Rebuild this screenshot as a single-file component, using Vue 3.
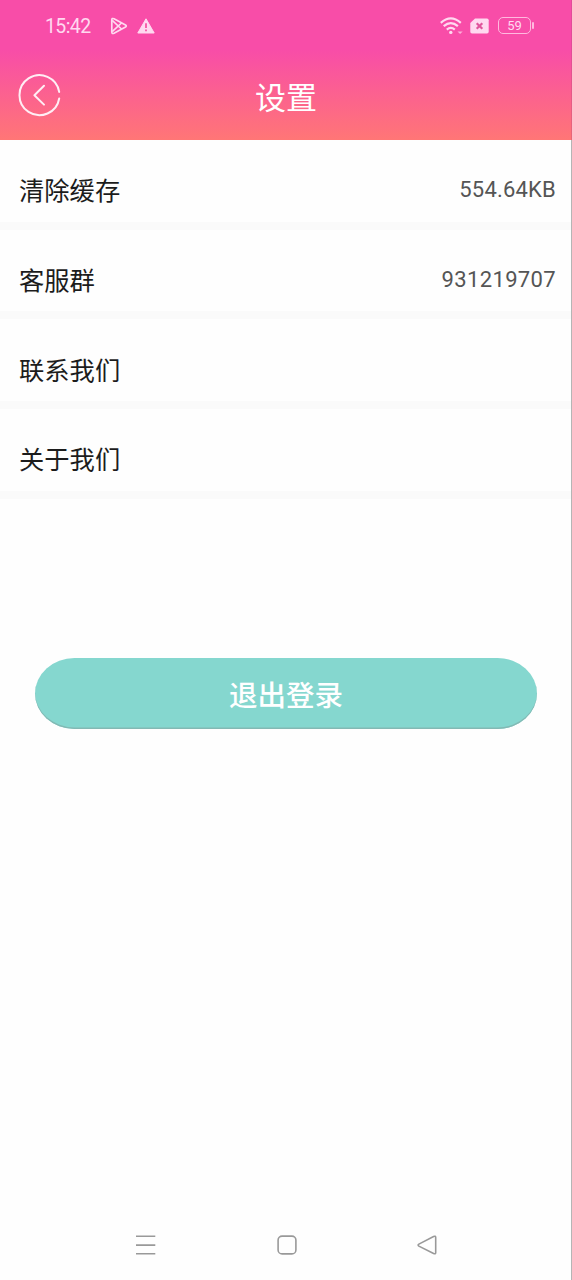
<script setup>
const rows = [
  { label: '清除缓存', value: '554.64KB' },
  { label: '客服群', value: '931219707', wide: true },
  { label: '联系我们', value: '' },
  { label: '关于我们', value: '' },
]
</script>

<template>
  <div class="screen">
    <header class="top">
      <div class="status">
        <span class="time">15:42</span>
        <svg class="play" width="18" height="18" viewBox="0 0 18 18" fill="none" stroke="currentColor" stroke-width="1.7" stroke-linejoin="round">
          <path d="M4 1.8Q1.8.8 1.8 3V15Q1.8 17.2 4 16.2L15.5 10Q17 9 15.5 8Z" />
          <path d="M2.2 3.4L11.5 12M2.2 14.6L11.5 6" />
        </svg>
        <svg class="warn" width="18" height="16" viewBox="0 0 18 16">
          <path d="M9 .8L17.2 15H.8Z" fill="currentColor" stroke="currentColor" stroke-linejoin="round" />
          <path d="M9 5.3V10M9 11.5V13.3" stroke="#f755a5" stroke-width="1.8" />
        </svg>
        <span class="gap"></span>
        <svg class="wifi" width="24" height="18" viewBox="0 0 24 18" fill="none" stroke="currentColor" stroke-width="2.2">
          <path d="M.8 5.8Q10.8-3 20.8 5.8M3.7 9.2Q10.8 3 17.9 9.2M6.8 12.6Q10.8 9.2 14.8 12.6" />
          <circle cx="10.8" cy="15.4" r="1.7" fill="currentColor" stroke="none" />
          <path d="M17.5 14.5H22.7L20.1 17Z" fill="currentColor" stroke="none" opacity=".7" />
        </svg>
        <svg class="sim" width="19" height="16" viewBox="0 0 19 16">
          <path d="M5 .5H17Q18.7.5 18.7 2.2V13.8Q18.7 15.5 17 15.5H2Q.3 15.5.3 13.8V5Z" fill="currentColor" />
          <path d="M6.7 5.2L12.3 10.8M12.3 5.2L6.7 10.8" stroke="#e0559c" stroke-width="2.2" />
        </svg>
        <span class="battery">59</span>
      </div>
      <div class="bar">
        <svg class="back" width="44" height="44" viewBox="0 0 44 44" fill="none" stroke="currentColor" stroke-width="2" stroke-linecap="round" stroke-linejoin="round">
          <path d="M41.2 18.9A20 20 0 1 0 41.2 25.5" />
          <path d="M26 12.8L16.4 22.2L26 31.6" />
        </svg>
        <h1>设置</h1>
        <span class="side"></span>
      </div>
    </header>

    <main>
      <div v-for="row in rows" :key="row.label" class="row">
        <span class="label">{{ row.label }}</span>
        <span class="value" :class="{ wide: row.wide }">{{ row.value }}</span>
      </div>
      <button class="logout">退出登录</button>
    </main>

    <nav>
      <svg width="22" height="22" viewBox="0 0 22 22"><path d="M1 2.2H20.3M1 11.1H20.3M1 19.8H20.3" /></svg>
      <svg width="22" height="22" viewBox="0 0 22 22"><rect x="2.1" y="2.1" width="17.8" height="17.8" rx="4" /></svg>
      <svg width="22" height="22" viewBox="0 0 22 22"><path d="M17.6 2.5Q19.7 1.6 19.7 3.6V18.4Q19.7 20.4 17.6 19.5L2.9 12.1Q1.3 11.1 2.9 10.1Z" /></svg>
    </nav>
  </div>
</template>

<style>
body {
  margin: 0;
}
</style>

<style scoped>
.screen {
  box-sizing: border-box;
  width: 572px;
  height: 1280px;
  display: flex;
  flex-direction: column;
  background: #fefefe;
  font-family: Roboto, "Noto Sans CJK SC", sans-serif;
  box-shadow: inset -1px 0 #b5b5b5;
}
.top {
  height: 140px;
  color: #fff;
  background: linear-gradient(#f84da8 0, #f84da8 50px, #ff7676 140px);
  box-shadow: inset -1px 0 rgba(180, 70, 120, 0.3);
}
.status {
  height: 51px;
  padding: 0 41px 0 45px;
  display: flex;
  align-items: center;
  color: #ffd9f0;
}
.time {
  width: 65px;
  padding-top: 2px;
  font-size: 19.5px;
  letter-spacing: -0.6px;
}
.warn {
  margin-left: 9px;
}
.gap {
  flex: 1;
}
.sim {
  margin: 0 9px 0 6px;
}
.battery {
  position: relative;
  box-sizing: border-box;
  width: 33px;
  height: 17px;
  border: 1.5px solid #ffb9df;
  border-radius: 5px;
  font-size: 13px;
  line-height: 15px;
  text-align: center;
}
.battery::after {
  content: "";
  position: absolute;
  right: -4px;
  top: 4px;
  width: 2px;
  height: 7px;
  border-radius: 1px;
  background: #ffb9df;
}
.bar {
  height: 88px;
  padding: 0 18px;
  display: flex;
  align-items: center;
  justify-content: space-between;
  color: #ffeef4;
}
.back {
  width: 44px;
}
.side {
  width: 44px;
}
h1 {
  margin: 8px 0 0;
  font-size: 31px;
  font-weight: 400;
  line-height: 40px;
  color: #fff;
}
.row {
  box-sizing: border-box;
  height: 89.75px;
  padding: 18px 15px 0 19px;
  margin-right: 1px;
  border-bottom: 8px solid #fafafa;
  display: flex;
  align-items: center;
  justify-content: space-between;
}
.row:first-child {
  height: 89.5px;
}
.label {
  padding-top: 5px;
  font-size: 25.3px;
  line-height: 32px;
  color: #1c1c1c;
}
.value {
  padding-top: 0.5px;
  font-size: 22px;
  line-height: 30px;
  letter-spacing: 0.2px;
  color: #555;
}
.wide {
  padding-top: 1px;
  letter-spacing: 0.35px;
}
.logout {
  display: block;
  width: 502px;
  height: 71px;
  margin: 159px 0 0 35px;
  padding: 0;
  border: 0;
  border-radius: 40px / 36px;
  background: #85d7cf;
  box-shadow: inset 0 -1.5px #83b9b4;
  color: #fff;
  font: 500 28.5px "Noto Sans CJK SC", sans-serif;
}
main {
  flex: 1;
}
nav {
  height: 70px;
  padding: 0 134px 0 135px;
  display: flex;
  align-items: center;
  justify-content: space-between;
}
nav svg {
  fill: none;
  stroke: #999;
  stroke-width: 1.6;
}
</style>
